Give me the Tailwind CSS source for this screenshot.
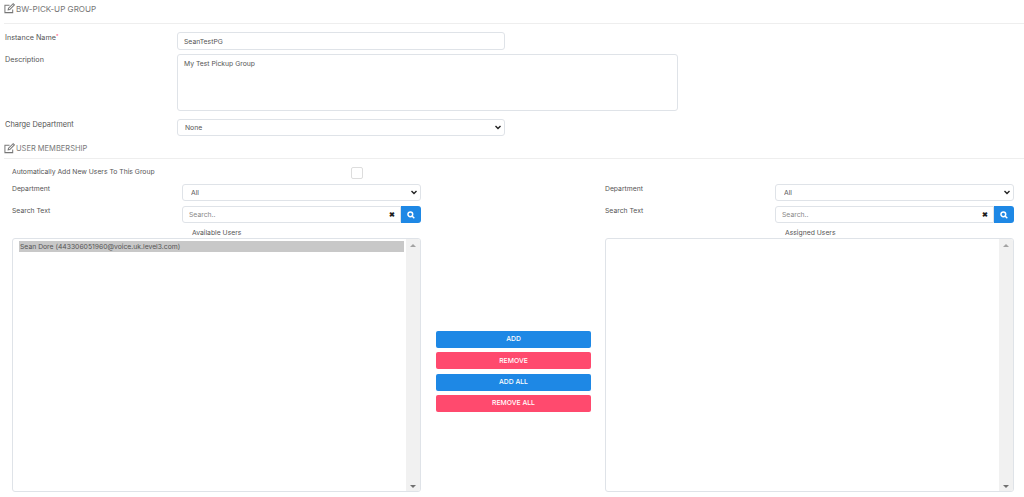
<!DOCTYPE html>
<html>
  <head>
    <title>BW-Pick-Up Group</title>
    <script src="https://cdn.jsdelivr.net/npm/@tailwindcss/browser@4"></script>
  </head>
  <body class="bg-white w-[1024px] h-[497px] overflow-hidden font-['Inter','Open_Sans',sans-serif] text-[6.8px] text-[#555]">
    <!-- HEADING -->
    <div class="h-[24px] ml-[4px] flex items-start pt-[3px] border-b border-[#eeeeee]">
      <svg class="w-[11px] h-[11px] mr-[1px] text-[#777]" viewBox="0 0 12 12" fill="none" stroke="currentColor" stroke-width="1.1">
        <path d="M9.5 7v3.5H1V2.5h5" />
        <path d="M4.5 7.5l.4-1.8L10 .8l1.3 1.3-5 5z" />
      </svg>
      <span class="text-[8.1px] leading-[10px] pt-[1px] text-[#777]">BW-PICK-UP GROUP</span>
    </div>

    <!-- MAIN FORM -->
    <div class="pl-[5px] pt-[8px]">
      <div class="flex h-[18px]">
        <label class="w-[172px] pt-[1px] leading-[10px] text-[7.2px]">Instance Name<sup class="text-[5px] text-[#ff4d6d]">*</sup></label>
        <input class="w-[328px] h-[18px] px-[6px] border border-[#dfe3e8] rounded-[3px] outline-none text-[#555]" value="SeanTestPG" />
      </div>
      <div class="flex mt-[4px] h-[57px]">
        <label class="w-[172px] pt-[1px] leading-[10px] text-[7.2px]">Description</label>
        <textarea class="w-[501px] h-[57px] px-[6px] py-[4px] border border-[#dfe3e8] rounded-[3px] outline-none resize-none text-[#555]">My Test Pickup Group</textarea>
      </div>
      <div class="flex mt-[8px] h-[17px]">
        <label class="w-[172px] pt-[1px] leading-[10px] text-[7.4px]">Charge Department</label>
        <div class="relative w-[328px] h-[17px]">
          <select class="appearance-none w-full h-full px-[7px] pt-[1px] bg-white border border-[#dfe3e8] rounded-[3px] text-[#555]"><option>None</option></select>
          <svg class="absolute right-[4px] top-[6px] w-[6px] h-[5px]" viewBox="0 0 6 5" fill="none" stroke="#222" stroke-width="1.4"><path d="M.5 1l2.5 2.5L5.500 1" /></svg>
        </div>
      </div>
    </div>

    <!-- USER MEMBERSHIP -->
    <div class="h-[19px] ml-[4px] mt-[4px] flex items-start pt-[3px] border-b border-[#eeeeee]">
      <svg class="w-[11px] h-[11px] mr-[1px] text-[#777]" viewBox="0 0 12 12" fill="none" stroke="currentColor" stroke-width="1.1">
        <path d="M9.5 7v3.5H1V2.5h5" />
        <path d="M4.5 7.5l.4-1.8L10 .8l1.3 1.3-5 5z" />
      </svg>
      <span class="text-[7.5px] leading-[10px] pt-[1px] text-[#777]">USER MEMBERSHIP</span>
    </div>

    <div class="grid grid-cols-[409px_184px_409px] pl-[12px] pt-[8px]">
      <!-- left column -->
      <div class="flex flex-col">
        <div class="flex h-[12px] items-start">
          <span class="leading-[10px] w-[339px]">Automatically Add New Users To This Group</span>
          <span class="w-[12px] h-[12px] border border-[#dddddd] rounded-[2px]"></span>
        </div>
        <div class="flex mt-[5px] h-[17px]">
          <label class="w-[170px] leading-[10px]">Department</label>
          <div class="relative w-[239px] h-[17px]">
            <select class="appearance-none w-full h-full px-[8px] pt-[1px] bg-white border border-[#dfe3e8] rounded-[3px] text-[#555]"><option>All</option></select>
            <svg class="absolute right-[4px] top-[6px] w-[6px] h-[5px]" viewBox="0 0 6 5" fill="none" stroke="#222" stroke-width="1.4"><path d="M.5 1l2.500 2.500L5.500 1" /></svg>
          </div>
        </div>
        <div class="flex mt-[5px] h-[17px]">
          <label class="w-[170px] leading-[10px]">Search Text</label>
          <div class="w-[239px] flex">
            <div class="flex-1 flex items-center justify-between pl-[6px] pr-[5px] pt-[1px] border border-[#dfe3e8] rounded-l-[3px]">
              <span class="text-[#888]">Search..</span><span class="text-[7px] font-bold text-[#222]">✖</span>
            </div>
            <button class="w-[20px] bg-[#1e88e5] rounded-r-[3px] flex items-center justify-center">
              <svg class="w-[8px] h-[8px]" viewBox="0 0 12 12" fill="none" stroke="white" stroke-width="2.2"><circle cx="5" cy="5" r="3.6" /><path d="M7.500 7.500L11 11" /></svg>
            </button>
          </div>
        </div>
        <div class="h-[15px] pl-[180px] pt-[5px] leading-[10px]">Available Users</div>
        <div class="flex h-[254px] border border-[#dfe3e8] rounded-[3px] overflow-hidden">
          <div class="flex-1 p-[2px_2px_0_6px]">
            <div class="bg-[#c8c8c8] h-[11px] leading-[11px] px-[1px]">Sean Dore (443306051960@voice.uk.level3.com)</div>
          </div>
          <div class="w-[14px] bg-[#f1f1f1] flex flex-col items-center justify-between pt-[5px] pb-[3px]">
            <span class="w-0 h-0 border-x-[3px] border-x-transparent border-b-[3px] border-b-[#a3a3a3]"></span>
            <span class="w-0 h-0 border-x-[3px] border-x-transparent border-t-[3px] border-t-[#707070]"></span>
          </div>
        </div>
      </div>

      <!-- buttons -->
      <div class="flex flex-col gap-[4.3px] pl-[15px] pr-[14px] pt-[164px] text-white text-center font-medium">
        <button class="h-[17px] bg-[#1e88e5] rounded-[2px]">ADD</button>
        <button class="h-[17px] bg-[#ff4a6e] rounded-[2px]">REMOVE</button>
        <button class="h-[17px] bg-[#1e88e5] rounded-[2px]">ADD ALL</button>
        <button class="h-[17px] bg-[#ff4a6e] rounded-[2px]">REMOVE ALL</button>
      </div>

      <!-- right column -->
      <div class="flex flex-col pt-[17px]">
        <div class="flex h-[17px]">
          <label class="w-[170px] leading-[10px]">Department</label>
          <div class="relative w-[239px] h-[17px]">
            <select class="appearance-none w-full h-full px-[8px] pt-[1px] bg-white border border-[#dfe3e8] rounded-[3px] text-[#555]"><option>All</option></select>
            <svg class="absolute right-[4px] top-[6px] w-[6px] h-[5px]" viewBox="0 0 6 5" fill="none" stroke="#222" stroke-width="1.4"><path d="M.5 1l2.500 2.500L5.500 1" /></svg>
          </div>
        </div>
        <div class="flex mt-[5px] h-[17px]">
          <label class="w-[170px] leading-[10px]">Search Text</label>
          <div class="w-[239px] flex">
            <div class="flex-1 flex items-center justify-between pl-[6px] pr-[5px] pt-[1px] border border-[#dfe3e8] rounded-l-[3px]">
              <span class="text-[#888]">Search..</span><span class="text-[7px] font-bold text-[#222]">✖</span>
            </div>
            <button class="w-[20px] bg-[#1e88e5] rounded-r-[3px] flex items-center justify-center">
              <svg class="w-[8px] h-[8px]" viewBox="0 0 12 12" fill="none" stroke="white" stroke-width="2.2"><circle cx="5" cy="5" r="3.6" /><path d="M7.500 7.500L11 11" /></svg>
            </button>
          </div>
        </div>
        <div class="h-[15px] pl-[180px] pt-[5px] leading-[10px]">Assigned Users</div>
        <div class="flex justify-end h-[254px] border border-[#dfe3e8] rounded-[3px] overflow-hidden">
          <div class="w-[14px] bg-[#f1f1f1] flex flex-col items-center justify-between pt-[5px] pb-[3px]">
            <span class="w-0 h-0 border-x-[3px] border-x-transparent border-b-[3px] border-b-[#a3a3a3]"></span>
            <span class="w-0 h-0 border-x-[3px] border-x-transparent border-t-[3px] border-t-[#707070]"></span>
          </div>
        </div>
      </div>
    </div>
  </body>
</html>
